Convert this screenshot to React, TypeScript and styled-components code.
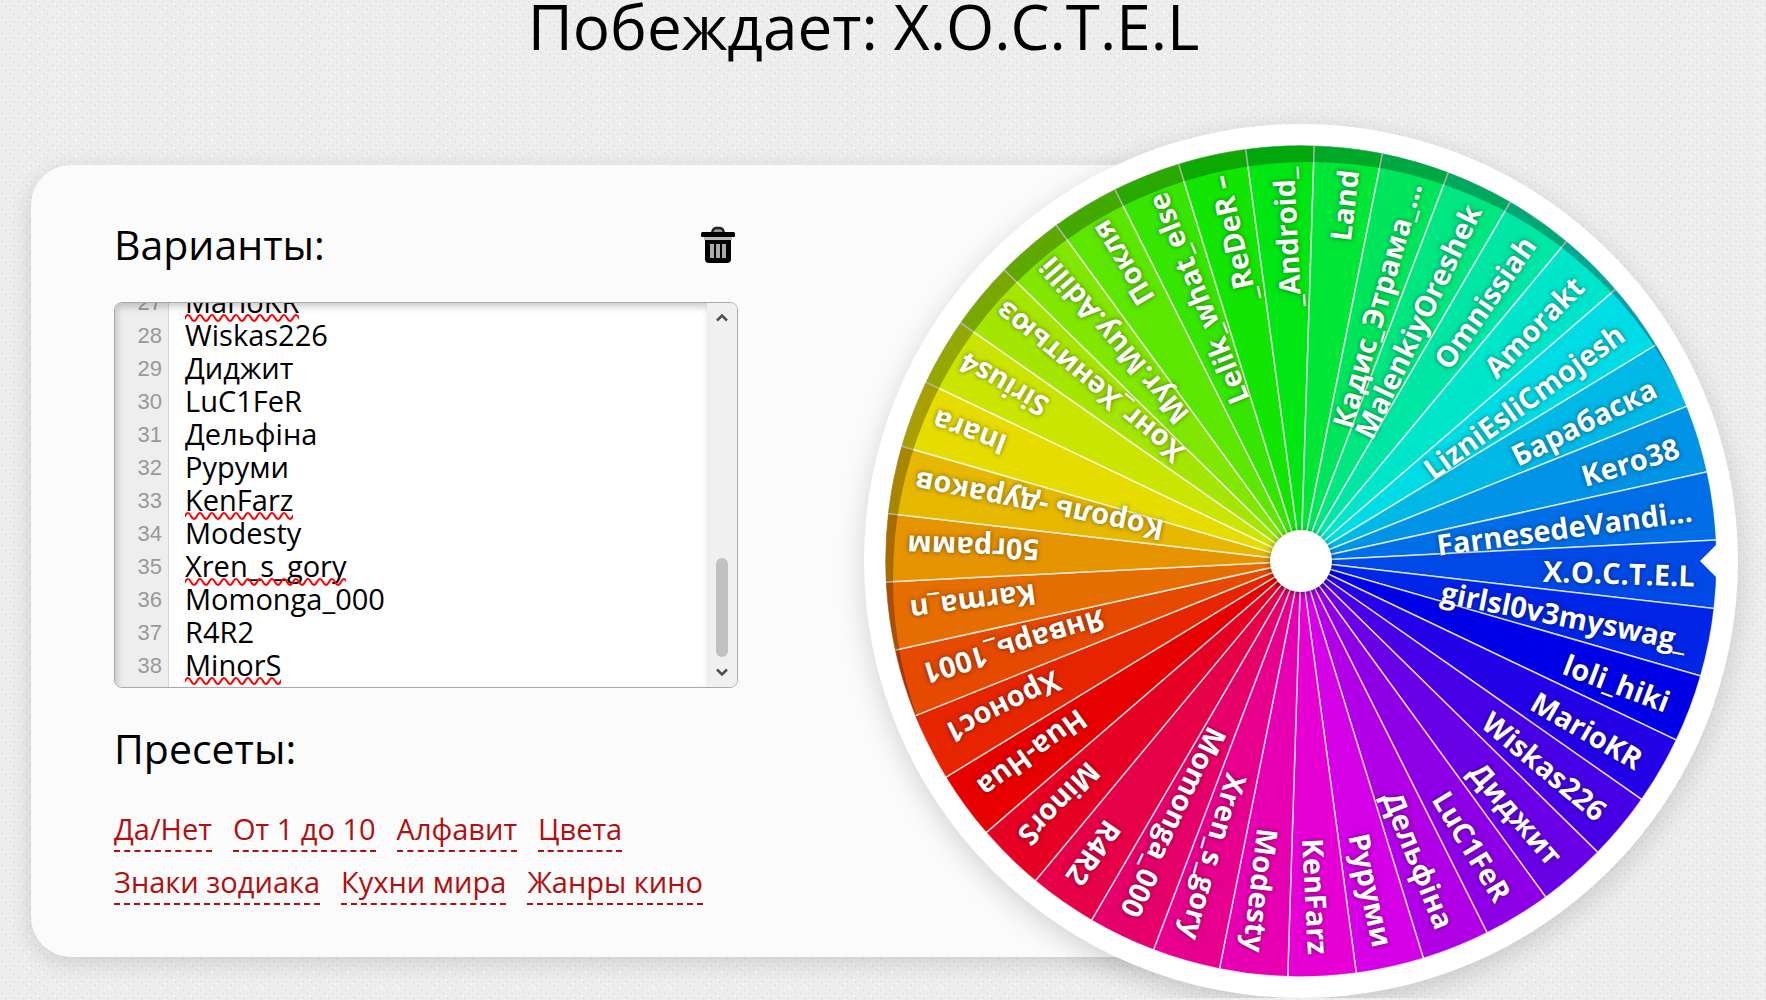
import React, { useLayoutEffect, useRef, useState } from "react";
import styled, { createGlobalStyle } from "styled-components";

const names = [
  "Hua-Hua", "Хронос1", "Январь_1001", "Karma_n", "50грамм", "Король -дураков",
  "Inara", "Sirius4", "Хонг_Хенитьюз", "Myr.Muy.Adilli", "Покля", "Lelik_what_else",
  "_ReDeR –", "_Android_", "Land", "Кадис_Этрама_Ди", "MalenkiyOreshek", "Omnissiah",
  "Amorakt", "LizniEsliCmojesh", "Барабаска", "Kero38", "FarnesedeVandiel", "X.O.C.T.E.L",
  "girlsl0v3myswag_", "loli_hiki", "MarioKR", "Wiskas226", "Диджит", "LuC1FeR",
  "Дельфіна", "Руруми", "KenFarz", "Modesty", "Xren_s_gory", "Momonga_000", "R4R2", "MinorS",
];
const labels: Record<number, string> = { 15: "Кадис_Этрама_...", 22: "FarnesedeVandi..." };
const misspelled = [26, 32, 34, 37];
const presets = ["Да/Нет", "От 1 до 10", "Алфавит", "Цвета", "Знаки зодиака", "Кухни мира", "Жанры кино"];

const FONT = '"Open Sans", "Noto Sans", sans-serif';
const LINE = 33;
const svgUrl = (body: string, w: number, h: number) =>
  `url("data:image/svg+xml,${encodeURIComponent(`<svg xmlns='http://www.w3.org/2000/svg' width='${w}' height='${h}'>${body}</svg>`)}")`;
const wave = svgUrl("<path d='M-6 4 Q-3 10 0 4 T6 4 T12 4 T18 4' fill='none' stroke='#f00' stroke-width='2'/>", 12, 8);
const weave = svgUrl(
  "<g fill='#000' fill-opacity='.07'><rect x='1' y='1' width='2' height='1'/><rect x='5' y='5' width='1' height='2'/><rect x='9' y='1' width='1' height='1'/><rect x='13' y='5' width='2' height='1'/><rect x='1' y='9' width='1' height='1'/><rect x='9' y='9' width='2' height='1'/><rect x='5' y='13' width='1' height='1'/><rect x='13' y='13' width='1' height='2'/></g><g fill='#fff' fill-opacity='.4'><rect x='3' y='3' width='2' height='2'/><rect x='11' y='7' width='2' height='2'/><rect x='7' y='11' width='2' height='2'/></g>",
  17, 16,
);

const Global = createGlobalStyle`
  * { box-sizing: border-box; }
  body { margin: 0; background: #eeeeee ${weave}; color: #000; font-family: ${FONT}; }
`;
const Page = styled.main`
  padding: 0 28px 0 31px;
`;
const Winner = styled.h1`
  margin: 0;
  height: 124px;
  padding-right: 42px;
  text-align: center;
  font-weight: 400;
  font-size: 62px;
  line-height: 52px;
`;
const Stage = styled.div`
  display: flex;
  align-items: center;
`;
const Card = styled.section`
  flex: 1;
  min-width: 0;
  height: 792px;
  padding: 59px 83px 40px;
  border-radius: 40px;
  background: #fbfbfb;
  box-shadow: 0 6px 24px rgba(0, 0, 0, 0.14);
`;
const Form = styled.div`
  width: 624px;
`;
const Head = styled.div`
  display: flex;
  justify-content: space-between;
  align-items: center;
  height: 40px;
  margin-bottom: 38px;
`;
const Title = styled.h2`
  margin: 0;
  font-size: 41px;
  line-height: 40px;
  font-weight: 400;
`;
const TrashButton = styled.button`
  display: flex;
  padding: 2px 0 0;
  margin-right: 3px;
  border: 0;
  background: none;
`;
const Editor = styled.div`
  position: relative;
  display: flex;
  height: 386px;
  margin-bottom: 40px;
  border: 1px solid #aaa;
  border-radius: 8px;
  background: #fff;
  overflow: hidden;
  &::after {
    content: "";
    position: absolute;
    inset: 0 30px 0 0;
    box-shadow: inset 2px 4px 7px rgba(0, 0, 0, 0.2);
    pointer-events: none;
  }
`;
const Gutter = styled.div`
  width: 54px;
  padding: 2px 6px 6px 0;
  border-right: 1px solid #d8d8d8;
  background: #eee;
  color: #999;
  text-align: right;
  font: 22px/${LINE}px "Liberation Sans", sans-serif;
  overflow: hidden;
`;
const Pane = styled.div`
  position: relative;
  flex: 1;
  overflow: hidden;
`;
const Area = styled.textarea`
  display: block;
  width: 100%;
  height: 100%;
  padding: 1px 16px 6px;
  border: 0;
  outline: 0;
  resize: none;
  background: none;
  color: #000;
  font: 29px/${LINE}px ${FONT};
  white-space: pre;
  scrollbar-width: none;
`;
const Squiggle = styled.i`
  position: absolute;
  left: 16px;
  height: 8px;
  background: ${wave} repeat-x;
  pointer-events: none;
`;
const Scrollbar = styled.div`
  display: flex;
  flex-direction: column;
  width: 30px;
  background: #f0f0f0;
`;
const ScrollButton = styled.button`
  height: 30px;
  padding: 0;
  border: 0;
  background: none;
`;
const Track = styled.div`
  position: relative;
  flex: 1;
`;
const Thumb = styled.div`
  position: absolute;
  left: 9px;
  width: 12px;
  border-radius: 6px;
  background: #c1c1c1;
`;
const Presets = styled.nav`
  display: flex;
  flex-wrap: wrap;
  gap: 12px 21px;
  margin-top: 43px;
`;
const Preset = styled.a`
  height: 41px;
  border-bottom: 2px dashed #b01010;
  color: #b01010;
  font-size: 29px;
  line-height: 36px;
  text-decoration: none;
`;
const Wheel = styled.svg`
  flex: none;
  width: 874px;
  height: 874px;
  margin-left: -437px;
  overflow: visible;
`;
const Ring = styled.circle`
  fill: #fff;
  filter: drop-shadow(0 8px 14px rgba(0, 0, 0, 0.16));
`;
const Hub = styled.circle`
  fill: #fff;
  filter: drop-shadow(0 2px 4px rgba(0, 0, 0, 0.5));
`;
const Label = styled.text`
  font: 700 29px ${FONT};
  fill: #fff;
  text-anchor: end;
  text-shadow: 0 0 5px rgba(0, 0, 0, 0.5);
`;

const R = 416;
const STEP = 360 / names.length;
const TURN = 139.2;
const BLUE = 25;
const hue = (i: number) => (i <= BLUE ? (i * 240) / BLUE : 240 + ((i - BLUE) * 120) / (names.length - BLUE));
const at = (deg: number) => {
  const a = (deg * Math.PI) / 180;
  return `${Math.cos(a) * R} ${Math.sin(a) * R}`;
};

function Fortune() {
  return (
    <Wheel viewBox="-437 -437 874 874" role="img" aria-label="Колесо">
      <Ring r="437" />
      {names.map((name, i) => (
        <path
          key={name}
          d={`M0 0 L${at(TURN + i * STEP)} A${R} ${R} 0 0 1 ${at(TURN + (i + 1) * STEP)} Z`}
          fill={`hsl(${hue(i)} 100% 45%)`}
          stroke="#fff"
          strokeOpacity="0.75"
          strokeWidth="1.5"
        />
      ))}
      {names.map((name, i) => (
        <g key={name} transform={`rotate(${TURN + (i + 0.5) * STEP})`}>
          <Label x="394" y="13">{labels[i] ?? name}</Label>
        </g>
      ))}
      <path
        fillRule="evenodd"
        fillOpacity="0.27"
        clipPath="url(#disc)"
        d="M-440 -440 H440 V440 H-440 Z M-408 17 a416 416 0 1 0 832 0 a416 416 0 1 0 -832 0 Z"
      />
      <clipPath id="disc"><circle r={R} /></clipPath>
      <circle r={R + 10} fill="none" stroke="#fff" strokeWidth="20" />
      <Hub r="31" />
      <path d="M399 0 L418 -19 V19 Z" fill="#fff" />
    </Wheel>
  );
}

function VariantsEditor() {
  const area = useRef<HTMLTextAreaElement>(null);
  const [view, setView] = useState({ top: 0, client: 384, full: 1261 });
  const [widths, setWidths] = useState<number[]>([]);
  const sync = () => {
    const el = area.current;
    if (el) setView({ top: el.scrollTop, client: el.clientHeight, full: el.scrollHeight });
  };
  useLayoutEffect(() => {
    const el = area.current;
    const ctx = document.createElement("canvas").getContext("2d");
    if (ctx) {
      ctx.font = `29px ${FONT}`;
      setWidths(misspelled.map((i) => ctx.measureText(names[i]).width));
    }
    if (el) el.scrollTop = el.scrollHeight;
    sync();
  }, []);
  const scroll = (by: number) => area.current?.scrollBy({ top: by });
  return (
    <Editor>
      <Gutter aria-hidden="true">
        <div style={{ marginTop: -view.top }}>
          {names.map((name, i) => <div key={name}>{i + 1}</div>)}
        </div>
      </Gutter>
      <Pane>
        <Area id="variants" ref={area} onScroll={sync} spellCheck={false} defaultValue={names.join("\n")} />
        {misspelled.map((line, k) => (
          <Squiggle key={line} style={{ top: (line + 1) * LINE - 3 - view.top, width: widths[k] }} />
        ))}
      </Pane>
      <Scrollbar>
        <ScrollButton type="button" aria-label="Вверх" onClick={() => scroll(-LINE)}>
          <svg width="12" height="10" viewBox="0 0 12 10"><path d="M1 7.500 L6 2.500 L11 7.500" fill="none" stroke="#505050" strokeWidth="2.500" /></svg>
        </ScrollButton>
        <Track>
          <Thumb style={{ top: `${(view.top / view.full) * 100}%`, height: `${(view.client / view.full) * 100}%` }} />
        </Track>
        <ScrollButton type="button" aria-label="Вниз" onClick={() => scroll(LINE)}>
          <svg width="12" height="10" viewBox="0 0 12 10"><path d="M1 2.500 L6 7.500 L11 2.500" fill="none" stroke="#505050" strokeWidth="2.500" /></svg>
        </ScrollButton>
      </Scrollbar>
    </Editor>
  );
}

export default function App() {
  return (
    <Page>
      <Global />
      <Winner>Побеждает: X.O.C.T.E.L</Winner>
      <Stage>
        <Card>
          <Form>
            <Head>
              <Title as="label" htmlFor="variants">Варианты:</Title>
              <TrashButton type="button" aria-label="Очистить">
                <svg width="34" height="38" viewBox="0 0 34 38">
                  <path d="M11 7 Q12 2 15 2 H19 Q22 2 23 7" fill="#999" stroke="#222" strokeWidth="2.500" />
                  <rect x="0" y="6" width="34" height="5" rx="1.500" fill="#000" />
                  <rect x="3" y="11" width="28" height="3" fill="#bbb" />
                  <path d="M4 14 H30 V33 Q30 37 26 37 H8 Q4 37 4 33 Z" fill="#000" />
                  <path d="M9 18 H13 V32 H9 Z M15 18 H19 V32 H15 Z M21 18 H25 V32 H21 Z" fill="#aaa" />
                </svg>
              </TrashButton>
            </Head>
            <VariantsEditor />
            <Title>Пресеты:</Title>
            <Presets>
              {presets.map((p) => <Preset key={p} href="#">{p}</Preset>)}
            </Presets>
          </Form>
        </Card>
        <Fortune />
      </Stage>
    </Page>
  );
}
